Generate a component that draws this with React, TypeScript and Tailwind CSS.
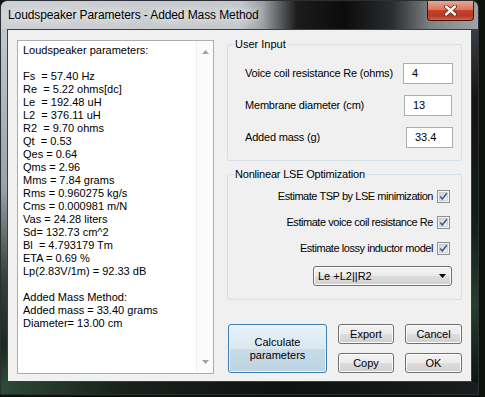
import React from 'react';

const lines = [
  'Loudspeaker parameters:',
  '',
  'Fs  = 57.40 Hz',
  'Re  = 5.22 ohms[dc]',
  'Le  = 192.48 uH',
  'L2  = 376.11 uH',
  'R2  = 9.70 ohms',
  'Qt  = 0.53',
  'Qes = 0.64',
  'Qms = 2.96',
  'Mms = 7.84 grams',
  'Rms = 0.960275 kg/s',
  'Cms = 0.000981 m/N',
  'Vas = 24.28 liters',
  'Sd= 132.73 cm^2',
  'Bl  = 4.793179 Tm',
  'ETA = 0.69 %',
  'Lp(2.83V/1m) = 92.33 dB',
  '',
  'Added Mass Method:',
  'Added mass = 33.40 grams',
  'Diameter= 13.00 cm',
];

const btn =
  'flex items-center justify-center rounded-[3px] border border-[#707070] bg-[linear-gradient(#f2f2f2_0%,#ebebeb_50%,#dddddd_51%,#cfcfcf_100%)] text-[11px] leading-[13px] text-black shadow-[inset_0_0_0_1px_#fcfcfc]';

const CheckBox: React.FC = () => (
  <svg width="13" height="13" viewBox="0 0 13 13" className="shrink-0">
    <defs>
      <linearGradient id="cbg" x1="0" y1="0" x2="1" y2="1">
        <stop offset="0" stopColor="#cbcfd5" />
        <stop offset="1" stopColor="#f6f6f6" />
      </linearGradient>
    </defs>
    <rect x="0.5" y="0.5" width="12" height="12" fill="#f4f4f4" stroke="#8e8f8f" />
    <rect x="2.5" y="2.5" width="8" height="8" fill="url(#cbg)" stroke="#b8bcc4" strokeWidth="0.6" />
    <path d="M3.2 6.4 L5.3 8.9 L9.8 3.2" fill="none" stroke="#3c5d9c" strokeWidth="1.6" />
  </svg>
);

const InputRow: React.FC<{ label: string; value: string; w: string; mr: string }> = ({ label, value, w, mr }) => (
  <div className="flex h-[21px] items-center justify-between pl-[17px]">
    <span className="tracking-[-0.2px]">{label}</span>
    <div className={`flex h-[21px] items-center border border-[#abadb3] bg-white pl-[8px] ${w} ${mr}`}>{value}</div>
  </div>
);

const CheckRow: React.FC<{ label: string }> = ({ label }) => (
  <div className="flex h-[16px] items-center justify-end gap-[4px] pr-[11px]">
    <span className="tracking-[-0.45px]">{label}</span>
    <CheckBox />
  </div>
);

export default function App() {
  return (
    <div className="h-[397px] w-[485px] overflow-hidden bg-[#0e120f] font-['Liberation_Sans',Arial,sans-serif] text-[11px] leading-[13px] text-black">
      <div className="flex h-[395px] w-[479px] flex-col overflow-hidden rounded-t-[7px] border border-[#2b2f33]">
        {/* title bar */}
        <div className="flex h-[28px] items-start bg-[linear-gradient(to_right,#cdd1d5_0%,#c3c7cb_50%,#9a9ea2_55%,#1c1c1c_62%,#0c0c0c_72%,#2a2c2e_82%,#7e8286_90%,#9ea2a6_100%)]">
          <span className="ml-[7px] mt-[7px] text-[12px] leading-[15px] tracking-[-0.1px] [text-shadow:0_0_8px_#fff,0_0_14px_#fff]">
            Loudspeaker Parameters - Added Mass Method
          </span>
          <div className="ml-auto mr-[4px] flex h-[20px] w-[47px] items-center justify-center rounded-b-[4px] border border-t-0 border-[#4a0f08] bg-[linear-gradient(#e8a594_0%,#d9775f_45%,#c3432a_50%,#b83a22_80%,#d2664a_100%)]">
            <svg width="13" height="11" viewBox="0 0 13 11">
              <path d="M2 1.5 L11 9.5 M11 1.5 L2 9.5" stroke="#5a2318" strokeWidth="4" strokeLinecap="round" />
              <path d="M2 1.5 L11 9.5 M11 1.5 L2 9.5" stroke="#ffffff" strokeWidth="2.4" strokeLinecap="round" />
            </svg>
          </div>
        </div>

        <div className="flex flex-1">
          <div className="w-[6px] bg-[linear-gradient(#c3c7cb_0%,#9da1a5_45%,#3a3f3c_70%,#1c2a21_90%,#2c4a34_100%)]" />

          {/* client area */}
          <div className="flex w-[465px] border border-[#3a3e42] bg-[#f0f0f0] pl-[9px] pt-[8px]">
            <div className="mt-[2px] flex h-[334px] w-[197px] border border-[#abadb3] bg-white">
              <div className="flex-1 whitespace-pre pl-[5px] pt-[3px]">
                {lines.map((l, i) => (
                  <div key={i} className="h-[13px]">{l}</div>
                ))}
              </div>
              <div className="flex w-[17px] flex-col items-center justify-between border-l border-[#f0f0f0] bg-[#fbfbfb] py-[9px]">
                <svg width="7" height="4" viewBox="0 0 7 4"><path d="M0 4 L3.5 0 L7 4 Z" fill="#a3a3a3" /></svg>
                <svg width="7" height="4" viewBox="0 0 7 4"><path d="M0 0 L3.5 4 L7 0 Z" fill="#a3a3a3" /></svg>
              </div>
            </div>

            <div className="ml-[13px] flex w-[235px] flex-col">
              <fieldset className="h-[123px] rounded-[3px] border border-[#d5dfe5] p-0 pt-[12px]">
                <legend className="ml-[6px] px-[1px]">User Input</legend>
                <div className="flex flex-col gap-[11px]">
                  <InputRow label="Voice coil resistance Re (ohms)" value="4" w="w-[50px]" mr="mr-[8px]" />
                  <InputRow label="Membrane diameter (cm)" value="13" w="w-[48px]" mr="mr-[9px]" />
                  <InputRow label="Added mass (g)" value="33.4" w="w-[47px]" mr="mr-[8px]" />
                </div>
              </fieldset>

              <fieldset className="mt-[7px] h-[132px] rounded-[3px] border border-[#d5dfe5] p-0 pt-[7px]">
                <legend className="ml-[6px] px-[1px] tracking-[-0.2px]">Nonlinear LSE Optimization</legend>
                <div className="flex flex-col gap-[10px]">
                  <CheckRow label="Estimate TSP by LSE minimization" />
                  <CheckRow label="Estimate voice coil resistance Re" />
                  <CheckRow label="Estimate lossy inductor model" />
                </div>
                <div className="mr-[9px] mt-[10px] flex justify-end">
                  <div className={`${btn} h-[20px] w-[139px] !justify-between pl-[4px] pr-[5px]`}>
                    <span>Le +L2||R2</span>
                    <svg width="7" height="4" viewBox="0 0 7 4"><path d="M0 0 L7 0 L3.5 4 Z" fill="#000" /></svg>
                  </div>
                </div>
              </fieldset>

              <div className="mt-[24px] flex pl-[1px]">
                <div className="flex h-[49px] w-[99px] flex-col items-center justify-center rounded-[3px] border border-[#3c7fb1] bg-[linear-gradient(#e8f2f8_0%,#dbe8f0_50%,#c8dbe7_51%,#bcd3e2_100%)] text-[11px] leading-[13px] shadow-[inset_0_0_0_1px_#e4f4fc]">
                  <span>Calculate</span>
                  <span>parameters</span>
                </div>
                <div className="ml-[11px] flex w-[56px] flex-col gap-[9px]">
                  <div className={`${btn} h-[20px]`}>Export</div>
                  <div className={`${btn} h-[20px]`}>Copy</div>
                </div>
                <div className="ml-[11px] flex w-[57px] flex-col gap-[9px]">
                  <div className={`${btn} h-[20px]`}>Cancel</div>
                  <div className={`${btn} h-[20px]`}>OK</div>
                </div>
              </div>
            </div>
          </div>

          <div className="w-[6px] bg-[linear-gradient(#3a3d40_0%,#141414_20%,#151d18_55%,#23402d_78%,#101511_100%)]" />
        </div>

        <div className="h-[12px] bg-[linear-gradient(to_right,#2e4a36_0%,#18221b_25%,#101210_60%,#1a1c1e_100%)]" />
      </div>
    </div>
  );
}
